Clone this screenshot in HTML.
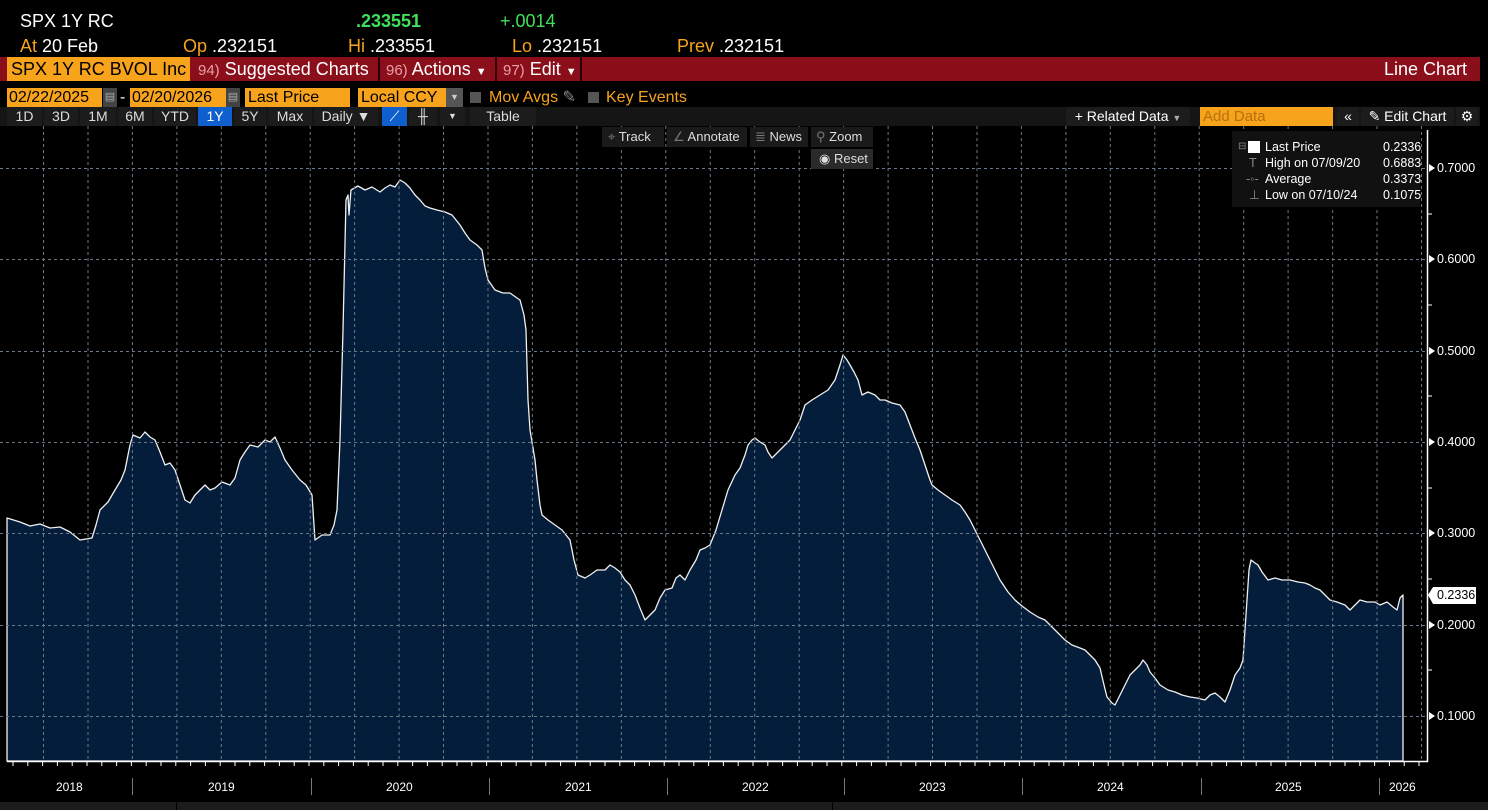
<!DOCTYPE html>
<html><head><meta charset="utf-8"><style>
*{margin:0;padding:0;box-sizing:border-box}
body{width:1488px;height:810px;background:#000;font-family:"Liberation Sans",sans-serif;color:#fff;position:relative;overflow:hidden}
.a{position:absolute;white-space:nowrap}
.big{font-size:18px;top:11px}
.or{color:#f7a31c}
.bar{position:absolute;left:0;top:57px;width:1480px;height:24px;background:#8b0f1b}
.tb{position:absolute;top:57px;height:24px;font-size:18px;line-height:24px;padding-left:6px;color:#fff}
.sep{border-left:2px solid #2a0005}
.ob{background:#f7a31c;color:#000}
.r2{top:88px;height:19px;font-size:16px;line-height:19px}
.btn{position:absolute;top:107px;height:19px;background:#1c1c1c;font-size:14px;line-height:19px;text-align:center;color:#ddd}
.tool{position:absolute;background:#1a1a1a;font-size:13px;line-height:20px;color:#ddd;height:20px}
.yl{position:absolute;left:1437px;font-size:12.5px;color:#fff}
.yr{position:absolute;font-size:12px;color:#fff;top:780px}
</style></head><body>
<div class="a big" style="left:20px">SPX 1Y RC</div>
<div class="a big" style="left:356px;color:#3fe05a;font-weight:bold">.233551</div>
<div class="a big" style="left:500px;color:#3fe05a">+.0014</div>
<div class="a big or" style="left:20px;top:36px">At <span style="color:#fff">20 Feb</span></div>
<div class="a big or" style="left:183px;top:36px">Op <span style="color:#fff">.232151</span></div>
<div class="a big or" style="left:348px;top:36px">Hi <span style="color:#fff">.233551</span></div>
<div class="a big or" style="left:512px;top:36px">Lo <span style="color:#fff">.232151</span></div>
<div class="a big or" style="left:677px;top:36px">Prev <span style="color:#fff">.232151</span></div>
<div class="bar"></div>
<div class="tb ob" style="left:7px;width:183px;padding-left:4px;overflow:hidden">SPX 1Y RC BVOL Inc</div>
<div class="tb" style="left:192px"><span style="color:#e7a0a6;font-size:15px">94)</span> Suggested Charts</div>
<div class="tb sep" style="left:378px"><span style="color:#e7a0a6;font-size:15px">96)</span> Actions <span style="font-size:11px">▼</span></div>
<div class="tb sep" style="left:495px"><span style="color:#e7a0a6;font-size:15px">97)</span> Edit <span style="font-size:11px">▼</span></div>
<div class="tb sep" style="left:580px;width:900px"></div>
<div class="tb" style="left:1378px">Line Chart</div>
<div class="a r2 ob" style="left:7px;width:95px;padding-left:2px">02/22/2025</div>
<div class="a r2" style="left:103px;width:14px;background:#444;color:#aaa;font-size:11px;text-align:center">▤</div>
<div class="a r2" style="left:120px;color:#fff">-</div>
<div class="a r2 ob" style="left:130px;width:96px;padding-left:2px">02/20/2026</div>
<div class="a r2" style="left:226px;width:14px;background:#444;color:#aaa;font-size:11px;text-align:center">▤</div>
<div class="a r2 ob" style="left:245px;width:105px;padding-left:3px">Last Price</div>
<div class="a r2 ob" style="left:358px;width:105px;padding-left:3px">Local CCY</div>
<div class="a r2" style="left:446px;width:17px;background:#555;color:#ccc;font-size:9px;text-align:center">▼</div>
<div class="a r2" style="left:470px;top:92px;width:11px;height:11px;background:#555"></div>
<div class="a r2 or" style="left:489px">Mov Avgs <span style="color:#888">✎</span></div>
<div class="a r2" style="left:588px;top:92px;width:11px;height:11px;background:#555"></div>
<div class="a r2 or" style="left:606px">Key Events</div>
<div style="position:absolute;left:0;top:107px;width:1480px;height:19px;background:#151515"></div>
<div class="btn" style="left:7px;width:35px">1D</div>
<div class="btn" style="left:44px;width:34px">3D</div>
<div class="btn" style="left:80px;width:36px">1M</div>
<div class="btn" style="left:118px;width:34px">6M</div>
<div class="btn" style="left:154px;width:42px">YTD</div>
<div class="btn" style="left:198px;width:34px;background:#0f5fcf;color:#fff">1Y</div>
<div class="btn" style="left:234px;width:32px">5Y</div>
<div class="btn" style="left:268px;width:44px">Max</div>
<div class="btn" style="left:314px;width:64px">Daily ▼</div>
<div class="btn" style="left:382px;width:25px;background:#0f5fcf;color:#fff">⟋</div>
<div class="btn" style="left:409px;width:28px">╫</div>
<div class="btn" style="left:440px;width:25px;font-size:9px">▼</div>
<div class="btn" style="left:470px;width:66px">Table</div>
<div class="btn" style="left:1066px;width:124px;color:#fff">+ Related Data <span style="font-size:9px;color:#aaa">▼</span></div>
<div class="btn" style="left:1200px;width:133px;background:#f7a31c;color:#b5700f;text-align:left;padding-left:3px;font-size:15px">Add Data</div>
<div class="btn" style="left:1337px;width:22px;color:#fff">«</div>
<div class="btn" style="left:1361px;width:93px;color:#fff">✎ Edit Chart</div>
<div class="btn" style="left:1456px;width:22px;color:#fff">⚙</div>

<svg class="a" style="left:0;top:126px" width="1488" height="676" viewBox="0 126 1488 676">
<path fill="#031d3b" stroke="#f0f0f0" stroke-width="1.3" stroke-linejoin="round" d="M7,518 L20,522 30,526 40,524 50,528 60,527 70,532 80,540 92,538 96,525 100,510 108,502 115,490 121,480 125,470 130,445 133,435 140,438 145,432 150,437 155,440 160,452 165,465 170,463 175,470 180,485 185,500 190,503 195,495 200,490 205,485 210,490 215,488 222,482 230,485 235,478 240,460 245,452 250,445 258,447 265,440 270,442 275,437 280,448 285,460 292,470 300,480 306,485 312,495 315,540 322,535 330,535 334,525 337,510 340,440 343,330 346,200 348,195 349,215 351,190 358,186 365,190 372,187 380,192 385,188 390,185 395,187 400,180 405,183 410,188 415,195 420,200 425,206 430,208 437,210 445,212 452,215 460,225 465,233 470,240 477,245 482,250 485,268 488,280 495,290 503,293 510,293 517,298 520,300 524,315 526,330 528,400 530,430 535,460 537,480 540,505 542,515 548,520 555,525 562,530 570,540 574,560 578,575 585,578 590,575 597,570 605,570 610,565 615,568 620,572 625,580 630,585 635,595 640,608 645,620 650,615 655,610 660,598 665,590 672,588 676,578 680,575 685,580 690,570 696,560 700,550 705,548 710,545 716,530 722,510 728,490 735,475 740,468 745,455 748,445 752,440 755,438 760,442 765,445 768,452 772,458 778,452 785,445 790,440 795,430 800,420 805,405 812,400 820,395 828,390 835,380 840,365 843,355 847,360 850,365 854,372 858,380 862,395 868,392 875,395 880,400 885,400 892,403 900,405 905,412 910,425 915,438 920,450 925,465 930,480 932,485 938,490 945,495 952,500 960,505 965,512 970,520 975,530 980,540 985,550 990,560 995,570 1000,580 1008,592 1015,600 1022,606 1030,612 1038,617 1045,620 1050,625 1055,630 1060,635 1065,640 1072,645 1080,648 1085,650 1090,655 1095,660 1100,668 1104,685 1107,697 1112,703 1115,705 1120,695 1125,685 1130,675 1135,670 1140,665 1143,660 1147,665 1150,672 1155,678 1160,685 1168,690 1175,692 1182,695 1190,697 1197,698 1205,700 1210,695 1215,693 1220,697 1225,702 1230,690 1235,675 1240,668 1243,660 1245,630 1247,600 1249,570 1251,560 1255,563 1258,565 1262,572 1268,580 1275,578 1282,580 1290,580 1298,582 1305,583 1310,585 1315,588 1320,590 1325,595 1330,600 1337,602 1345,605 1350,610 1355,605 1360,600 1367,602 1375,602 1380,605 1387,602 1393,607 1397,610 1400,598 1403,595 L1403,761 L7,761 Z"/>
<g stroke="#6a7888" stroke-dasharray="3,3" stroke-width="1">
<line x1="0" x2="1427" y1="168.5" y2="168.5"/><line x1="0" x2="1427" y1="259.5" y2="259.5"/><line x1="0" x2="1427" y1="351.5" y2="351.5"/><line x1="0" x2="1427" y1="442.5" y2="442.5"/><line x1="0" x2="1427" y1="533.5" y2="533.5"/><line x1="0" x2="1427" y1="625.5" y2="625.5"/><line x1="0" x2="1427" y1="716.5" y2="716.5"/>
</g>
<g stroke="#6a7888" stroke-dasharray="3,3" id="vg"></g>
<line x1="1427.5" y1="130" x2="1427.5" y2="762" stroke="#fff" stroke-width="1.5"/>
<line x1="7" y1="761.5" x2="1428" y2="761.5" stroke="#fff" stroke-width="1.5"/>
<g id="tk" stroke="#fff"></g>
<g stroke="#777"><line x1="132.5" x2="132.5" y1="778" y2="795"/><line x1="311.5" x2="311.5" y1="778" y2="795"/><line x1="489.5" x2="489.5" y1="778" y2="795"/><line x1="667.5" x2="667.5" y1="778" y2="795"/><line x1="844.5" x2="844.5" y1="778" y2="795"/><line x1="1022.5" x2="1022.5" y1="778" y2="795"/><line x1="1201.5" x2="1201.5" y1="778" y2="795"/><line x1="1379.5" x2="1379.5" y1="778" y2="795"/></g>
<g fill="#fff"><path d="M1429,164 l6,4 l-6,4z"/><path d="M1429,255 l6,4 l-6,4z"/><path d="M1429,347 l6,4 l-6,4z"/><path d="M1429,438 l6,4 l-6,4z"/><path d="M1429,529 l6,4 l-6,4z"/><path d="M1429,621 l6,4 l-6,4z"/><path d="M1429,712 l6,4 l-6,4z"/><path d="M1428,595 l5,-8 h43 v17 h-43z"/></g>
</svg>
<script>
var g=document.getElementById('vg'),s='';for(var x=43.5;x<1427;x+=44.45){s+='<line x1="'+x.toFixed(1)+'" x2="'+x.toFixed(1)+'" y1="126" y2="761"/>';}g.innerHTML=s;
var t=document.getElementById('tk'),u='';for(var x=13;x<1427;x+=14.8){u+='<line x1="'+x.toFixed(1)+'" x2="'+x.toFixed(1)+'" y1="762" y2="766"/>';}
[214,305,396,488,579,670].forEach(function(y){u+='<line x1="1427" x2="1432" y1="'+y+'" y2="'+y+'"/>';});t.innerHTML=u;
</script>
<div class="yl" style="top:161px">0.7000</div>
<div class="yl" style="top:252px">0.6000</div>
<div class="yl" style="top:344px">0.5000</div>
<div class="yl" style="top:435px">0.4000</div>
<div class="yl" style="top:526px">0.3000</div>
<div class="yl" style="top:618px">0.2000</div>
<div class="yl" style="top:709px">0.1000</div>
<div class="yl" style="top:588px;color:#000">0.2336</div>
<div class="yr" style="left:56px">2018</div>
<div class="yr" style="left:208px">2019</div>
<div class="yr" style="left:386px">2020</div>
<div class="yr" style="left:565px">2021</div>
<div class="yr" style="left:742px">2022</div>
<div class="yr" style="left:919px">2023</div>
<div class="yr" style="left:1097px">2024</div>
<div class="yr" style="left:1275px">2025</div>
<div class="yr" style="left:1389px">2026</div>
<div style="position:absolute;left:0;top:802px;width:1488px;height:8px;background:#1c1c1c"></div>
<div style="position:absolute;left:176px;top:802px;width:1px;height:8px;background:#000"></div>
<div style="position:absolute;left:832px;top:802px;width:1px;height:8px;background:#000"></div>
<div class="tool" style="left:602px;top:127px;width:62px;padding-left:6px"><span style="color:#777">⌖</span> Track</div>
<div class="tool" style="left:667px;top:127px;width:80px;padding-left:6px"><span style="color:#777">∠</span> Annotate</div>
<div class="tool" style="left:750px;top:127px;width:58px;padding-left:5px"><span style="color:#777">≣</span> News</div>
<div class="tool" style="left:811px;top:127px;width:62px;padding-left:5px"><span style="color:#777">⚲</span> Zoom</div>
<div class="tool" style="left:811px;top:149px;width:62px;padding-left:8px;background:#2a2a2a">◉ Reset</div>
<div style="position:absolute;left:1232px;top:131px;width:188px;height:76px;background:#111;font-size:12.5px;line-height:16px;color:#fff;padding:8px 0 0 6px">
<div style="position:relative;padding-left:27px">
<span style="position:absolute;left:0;top:0;color:#888;font-size:10px">⊟</span><span style="position:absolute;left:10px;top:2px;width:12px;height:12px;background:#fff"></span>Last Price<span style="position:absolute;left:145px">0.2336</span></div>
<div style="position:relative;padding-left:27px"><span style="position:absolute;left:11px;color:#888">T</span>High on 07/09/20<span style="position:absolute;left:145px">0.6883</span></div>
<div style="position:relative;padding-left:27px"><span style="position:absolute;left:8px;color:#888">-◦-</span>Average<span style="position:absolute;left:145px">0.3373</span></div>
<div style="position:relative;padding-left:27px"><span style="position:absolute;left:11px;color:#888">⊥</span>Low on 07/10/24<span style="position:absolute;left:145px">0.1075</span></div>
</div>
</body></html>
